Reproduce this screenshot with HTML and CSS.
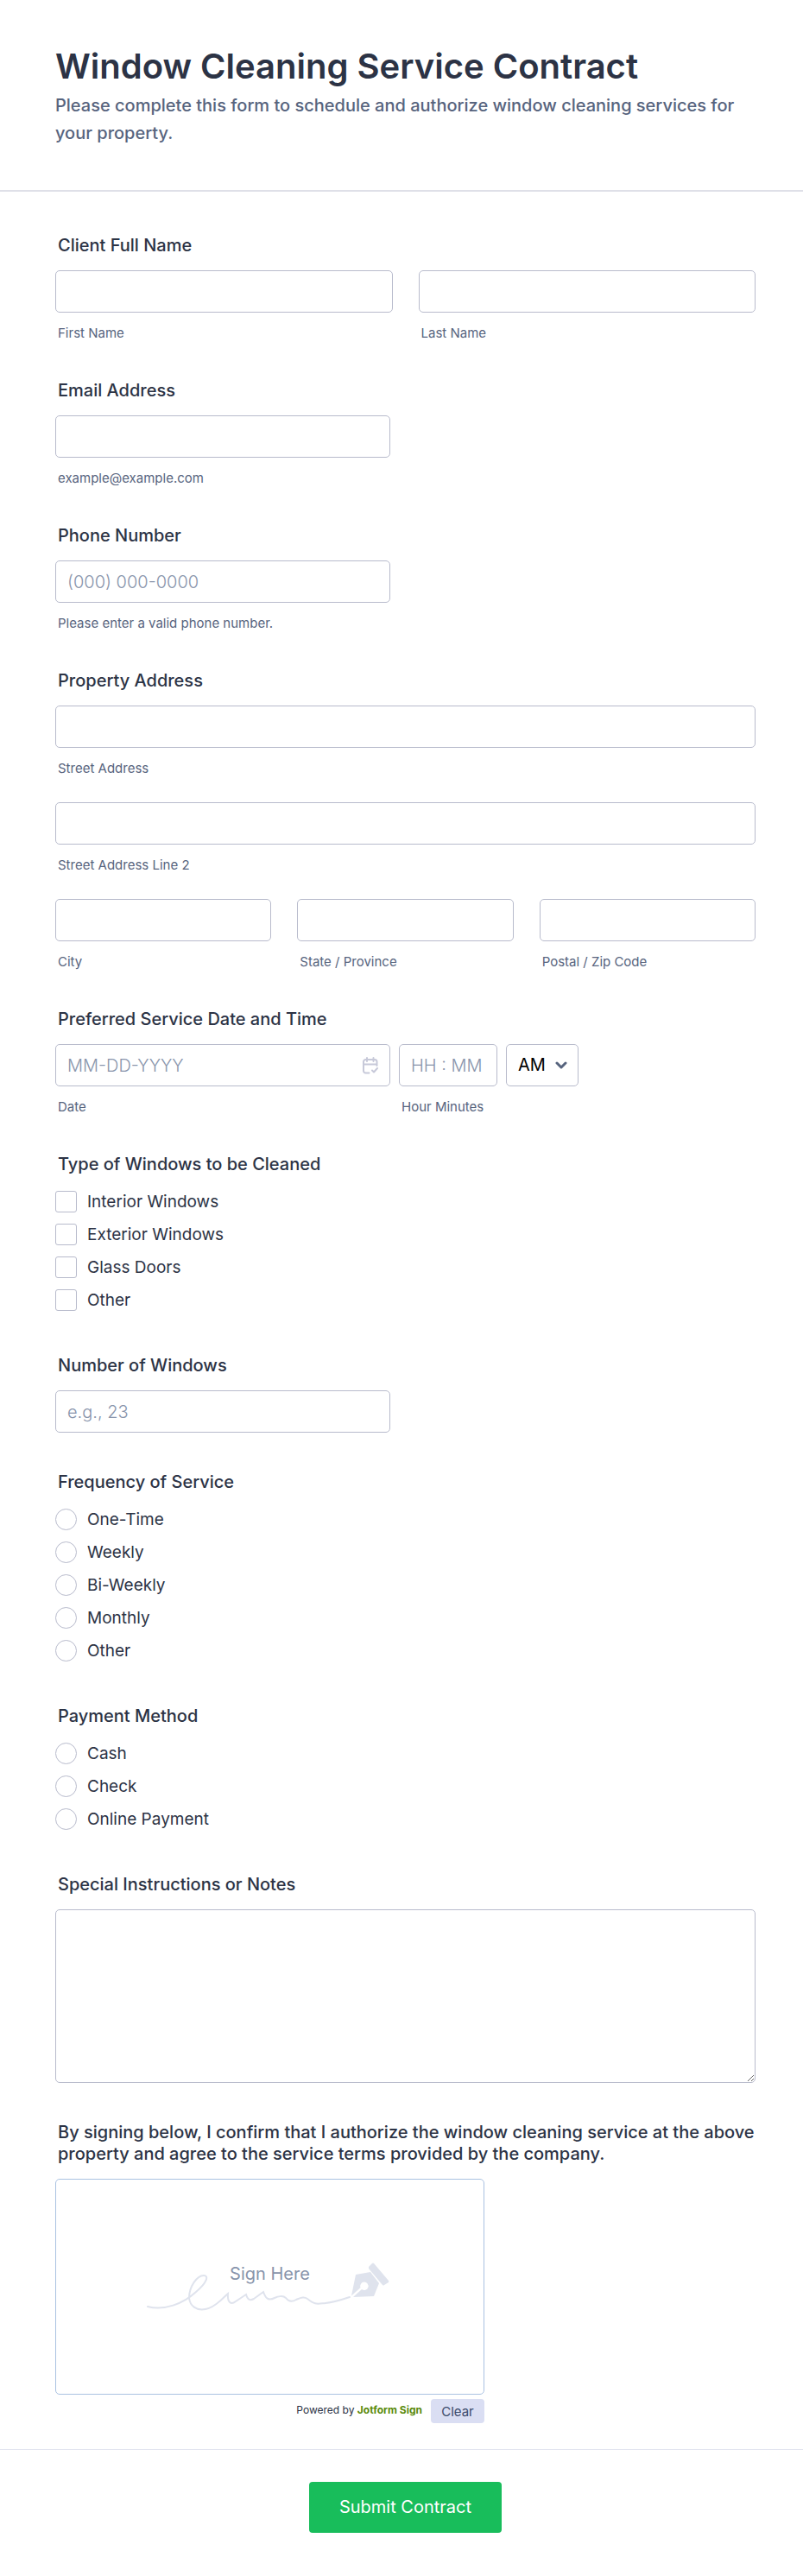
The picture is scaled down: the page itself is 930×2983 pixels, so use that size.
FILE: index.html
```
<!DOCTYPE html>
<html lang="en">
<head>
    <meta charset="UTF-8">
    <meta name="viewport" content="width=device-width, initial-scale=1.0">
    <title>Window Cleaning Service Contract</title>
    <link rel="stylesheet" href="styles.css">
</head>
<body>
<form class="form" action="#" method="post">
    <header class="form-header">
        <h1>Window Cleaning Service Contract</h1>
        <p>Please complete this form to schedule and authorize window cleaning services for your property.</p>
    </header>

    <div class="form-body">
        <fieldset class="field">
            <legend class="label">Client Full Name</legend>
            <div class="cols">
                <div class="sub">
                    <input class="box" type="text" id="first-name">
                    <label for="first-name">First Name</label>
                </div>
                <div class="sub">
                    <input class="box" type="text" id="last-name">
                    <label for="last-name">Last Name</label>
                </div>
            </div>
        </fieldset>

        <div class="field">
            <label class="label" for="email">Email Address</label>
            <div class="sub half">
                <input class="box" type="email" id="email">
                <label for="email">example@example.com</label>
            </div>
        </div>

        <div class="field">
            <label class="label" for="phone">Phone Number</label>
            <div class="sub half">
                <input class="box" type="tel" id="phone" placeholder="(000) 000-0000">
                <label for="phone">Please enter a valid phone number.</label>
            </div>
        </div>

        <fieldset class="field">
            <legend class="label">Property Address</legend>
            <div class="rows">
                <div class="sub">
                    <input class="box" type="text" id="street">
                    <label for="street">Street Address</label>
                </div>
                <div class="sub">
                    <input class="box" type="text" id="street2">
                    <label for="street2">Street Address Line 2</label>
                </div>
                <div class="cols">
                    <div class="sub">
                        <input class="box" type="text" id="city">
                        <label for="city">City</label>
                    </div>
                    <div class="sub">
                        <input class="box" type="text" id="state">
                        <label for="state">State / Province</label>
                    </div>
                    <div class="sub">
                        <input class="box" type="text" id="zip">
                        <label for="zip">Postal / Zip Code</label>
                    </div>
                </div>
            </div>
        </fieldset>

        <fieldset class="field">
            <legend class="label">Preferred Service Date and Time</legend>
            <div class="datetime">
                <div class="sub half">
                    <div class="date-wrap">
                        <input class="box" type="text" id="date" placeholder="MM-DD-YYYY">
                        <svg class="calendar" viewBox="0 0 18 20" aria-hidden="true">
                            <path d="M16.500 10V5.500A2.500 2.500 0 0 0 14 3H3.500A2.500 2.500 0 0 0 1 5.500V16A2.500 2.500 0 0 0 3.500 18.500H7.500M1 8.500H16.500M5 1V5M12.500 1V5M11 15.500L13 17.500L17 13"/>
                        </svg>
                    </div>
                    <label for="date">Date</label>
                </div>
                <div class="sub time">
                    <input class="box" type="text" id="time" placeholder="HH : MM">
                    <label for="time">Hour Minutes</label>
                </div>
                <div class="ampm">
                    <select class="box" aria-label="AM or PM">
                        <option>AM</option>
                        <option>PM</option>
                    </select>
                    <svg class="chevron" viewBox="0 0 14 10" aria-hidden="true"><path d="M2 2L7 7L12 2"/></svg>
                </div>
            </div>
        </fieldset>

        <fieldset class="field">
            <legend class="label">Type of Windows to be Cleaned</legend>
            <div class="options">
                <label><input type="checkbox" name="type" value="interior">Interior Windows</label>
                <label><input type="checkbox" name="type" value="exterior">Exterior Windows</label>
                <label><input type="checkbox" name="type" value="doors">Glass Doors</label>
                <label><input type="checkbox" name="type" value="other">Other</label>
            </div>
        </fieldset>

        <div class="field">
            <label class="label" for="count">Number of Windows</label>
            <div class="half">
                <input class="box" type="text" id="count" placeholder="e.g., 23">
            </div>
        </div>

        <fieldset class="field">
            <legend class="label">Frequency of Service</legend>
            <div class="options">
                <label><input type="radio" name="frequency" value="once">One-Time</label>
                <label><input type="radio" name="frequency" value="weekly">Weekly</label>
                <label><input type="radio" name="frequency" value="biweekly">Bi-Weekly</label>
                <label><input type="radio" name="frequency" value="monthly">Monthly</label>
                <label><input type="radio" name="frequency" value="other">Other</label>
            </div>
        </fieldset>

        <fieldset class="field">
            <legend class="label">Payment Method</legend>
            <div class="options">
                <label><input type="radio" name="payment" value="cash">Cash</label>
                <label><input type="radio" name="payment" value="check">Check</label>
                <label><input type="radio" name="payment" value="online">Online Payment</label>
            </div>
        </fieldset>

        <div class="field">
            <label class="label" for="notes">Special Instructions or Notes</label>
            <textarea class="box" id="notes"></textarea>
        </div>

        <div class="field">
            <div class="label">By signing below, I confirm that I authorize the window cleaning service at the above property and agree to the service terms provided by the company.</div>
            <div class="signature">
                <div class="pad">
                    <svg viewBox="0 0 290 64" aria-hidden="true">
                        <path class="stroke" d="M1 51C20 56 42 48 57 34C70 23 72 15 66 15C58 15 49 28 49 41C50 50 57 56 68 54C80 52 90 39 94 36C93 47 98 49 103 45L115 37C117 44 120 44 124 42L135 34C138 43 142 44 148 41C152 39 158 38 161 41C164 45 168 46 173 43C178 41 182 39 186 42C195 49 196 48 207 47C216 46 226 43 235 40"/>
                        <path class="nib" d="M257 5L261 1Q262 0 263 1L280 21Q280.500 22 280 23L275 26Q274 27 273 26L257 7ZM242 14L259 11L269 24L263 39L239 40L249 31A4.700 4.700 0 1 0 247.500 29L237 38.500Z"/>
                    </svg>
                    <span>Sign Here</span>
                </div>
                <div class="pad-footer">
                    <div class="powered">Powered by <a href="#">Jotform Sign</a></div>
                    <button type="button" class="clear">Clear</button>
                </div>
            </div>
        </div>
    </div>

    <footer class="form-footer">
        <button type="submit" class="submit">Submit Contract</button>
    </footer>
</form>
</body>
</html>
```

FILE: styles.css
```
* {
    box-sizing: border-box;
}

body {
    margin: 0;
    background-color: #fff;
    color: #2c3345;
    font-family: Inter, "Liberation Sans", sans-serif;
    font-size: 20px;
    line-height: 25px;
}

.form-header {
    padding: 52px 64px 44px;
    border-bottom: 2px solid #dfe0e8;
}

.form-header h1 {
    margin: 0;
    font-size: 40px;
    line-height: 50px;
    font-weight: 600;
}

.form-header p {
    margin: 4px 0 6px;
    color: #57647e;
    line-height: 32px;
    font-weight: 500;
}

.form-body {
    padding: 50px 55px 30px 64px;
    display: flex;
    flex-direction: column;
    gap: 45px;
}

.field {
    margin: 0;
    padding: 0;
    border: 0;
    min-width: 0;
}

.label {
    display: block;
    padding: 0 0 0 3px;
    margin-bottom: 16px;
    font-weight: 500;
}

.box {
    display: block;
    width: 100%;
    height: 49px;
    padding: 0 13px;
    border: 1px solid #b8bbcc;
    border-radius: 5px;
    background-color: #fff;
    color: #000;
    font: inherit;
    outline: none;
}

.box::placeholder {
    color: #8894ab;
    font-weight: 300;
    opacity: 1;
}

textarea.box {
    height: 201px;
    padding: 12px;
    resize: vertical;
}

.half {
    width: 388px;
    max-width: 100%;
}

/* input with a small caption under it */
.sub label {
    display: block;
    margin-top: 15px;
    padding-left: 3px;
    color: #57647e;
    font-size: 15px;
    line-height: 18px;
}

.cols {
    display: grid;
    grid-auto-flow: column;
    grid-auto-columns: 1fr;
    gap: 30px;
}

.rows {
    display: flex;
    flex-direction: column;
    gap: 30px;
}

.datetime {
    display: flex;
    gap: 10px;
}

.date-wrap,
.ampm {
    position: relative;
}

.calendar {
    position: absolute;
    top: 15px;
    right: 14px;
    width: 18px;
    height: 20px;
    fill: none;
    stroke: #c7c9d9;
    stroke-width: 2;
    stroke-linecap: round;
    stroke-linejoin: round;
}

.time {
    width: 114px;
}

.ampm {
    width: 84px;
}

.ampm .box {
    appearance: none;
}

.chevron {
    position: absolute;
    top: 20px;
    right: 13px;
    width: 14px;
    height: 10px;
    fill: none;
    stroke: #57647e;
    stroke-width: 3;
    stroke-linecap: round;
    stroke-linejoin: round;
    pointer-events: none;
}

.options {
    display: flex;
    flex-direction: column;
    align-items: flex-start;
    gap: 13px;
    padding: 2px 0 6px;
}

.options label {
    display: flex;
    align-items: center;
    gap: 12px;
    font-size: 19px;
}

.options input {
    appearance: none;
    width: 25px;
    height: 25px;
    margin: 0;
    border: 1px solid #b8bbcc;
    border-radius: 3px;
    background-color: #fff;
}

.options input[type="radio"] {
    border-radius: 50%;
}

.options input:checked {
    background-color: #18bd5b;
}

.signature {
    width: 497px;
    max-width: 100%;
}

.pad {
    position: relative;
    display: flex;
    justify-content: center;
    height: 250px;
    padding-top: 96px;
    border: 1px solid #aac2e2;
    border-radius: 5px;
}

.pad svg {
    width: 290px;
    height: 64px;
    margin-left: 5px;
}

.pad .stroke {
    fill: none;
    stroke: #dfe3ed;
    stroke-width: 2;
    stroke-linecap: round;
}

.pad .nib {
    fill: #dfe3ed;
}

.pad span {
    position: absolute;
    top: 97px;
    left: 0;
    right: 0;
    text-align: center;
    color: #8894ab;
}

.pad-footer {
    display: flex;
    justify-content: flex-end;
    gap: 10px;
    padding-top: 5px;
}

.powered {
    font-size: 12px;
}

.powered a {
    color: #5a8a0b;
    font-weight: 700;
    text-decoration: none;
}

.clear {
    width: 62px;
    height: 28px;
    padding: 0;
    border: 0;
    border-radius: 4px;
    background-color: #dadef3;
    color: #3b4a6b;
    font-family: inherit;
    font-size: 15px;
}

.form-footer {
    display: flex;
    justify-content: center;
    padding: 37px 55px 50px 64px;
    border-top: 1px solid #e3e5f0;
}

.submit {
    height: 59px;
    padding: 0 35px;
    border: 0;
    border-radius: 4px;
    background-color: #18bd5b;
    color: #fff;
    font: inherit;
    cursor: pointer;
}
```
